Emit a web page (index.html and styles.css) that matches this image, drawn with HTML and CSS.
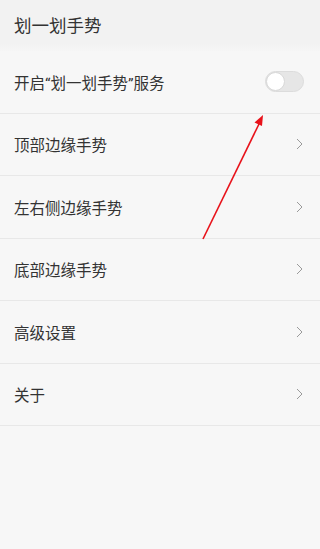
FILE: index.html
```html
<!DOCTYPE html>
<html lang="zh-CN">
<head>
  <meta charset="UTF-8">
  <meta name="viewport" content="width=device-width, initial-scale=1.0">
  <title>划一划手势</title>
  <link rel="stylesheet" href="styles.css">
</head>
<body>
  <!-- Header -->
  <header class="title-bar">
    <h1>划一划手势</h1>
  </header>

  <!-- Settings list -->
  <main class="settings">
    <div class="row">
      <span class="label">开启“划一划手势”服务</span>
      <span class="switch"><span class="knob"></span></span>
    </div>
    <div class="row">
      <span class="label">顶部边缘手势</span>
      <svg class="chevron" viewBox="0 0 7 12"><path d="M1 1l5 5-5 5"/></svg>
    </div>
    <div class="row">
      <span class="label">左右侧边缘手势</span>
      <svg class="chevron" viewBox="0 0 7 12"><path d="M1 1l5 5-5 5"/></svg>
    </div>
    <div class="row">
      <span class="label">底部边缘手势</span>
      <svg class="chevron" viewBox="0 0 7 12"><path d="M1 1l5 5-5 5"/></svg>
    </div>
    <div class="row">
      <span class="label">高级设置</span>
      <svg class="chevron" viewBox="0 0 7 12"><path d="M1 1l5 5-5 5"/></svg>
    </div>
    <div class="row">
      <span class="label">关于</span>
      <svg class="chevron" viewBox="0 0 7 12"><path d="M1 1l5 5-5 5"/></svg>
    </div>
  </main>

  <!-- Annotation arrow -->
  <svg class="arrow" viewBox="0 0 320 549">
    <line x1="203" y1="239" x2="259" y2="124" stroke="#e8121a" stroke-width="1.6"/>
    <polygon points="263,115 254.5,122.5 262,126" fill="#e8121a"/>
  </svg>
</body>
</html>
```

FILE: styles.css
```css
/* General Reset */
* {
  margin: 0;
  padding: 0;
  box-sizing: border-box;
}

body {
  font-family: Roboto, "Noto Sans CJK SC", sans-serif;
  background-color: #f7f7f7;
  color: #333;
  min-height: 100vh;
  position: relative;
}

/* Header */
.title-bar {
  height: 51px;
  background: linear-gradient(#f2f2f2 85%, #f6f6f6);
  display: flex;
  align-items: center;
  padding: 0 14px 2px;
}

.title-bar h1 {
  font-size: 17.5px;
  font-weight: normal;
  color: #333;
}

/* Rows */
.row {
  height: 62.5px;
  display: flex;
  align-items: center;
  justify-content: space-between;
  padding: 0 17px 0 14px;
  border-bottom: 1.5px solid #e8e8e8;
}

.label {
  font-size: 15.5px;
  color: #333;
}

.chevron {
  width: 7px;
  height: 12px;
  fill: none;
  stroke: #9a9a9a;
  stroke-width: 1;
}

/* Switch */
.switch {
  width: 39px;
  height: 21px;
  margin-right: -1px;
  border-radius: 11px;
  background-color: #e6e6e6;
  border: 1px solid #dcdcdc;
  display: flex;
  align-items: center;
}

.knob {
  width: 19px;
  height: 19px;
  border-radius: 50%;
  background-color: #fff;
  border: 1px solid #d8d8d8;
}

/* Arrow overlay */
.arrow {
  position: absolute;
  top: 0;
  left: 0;
  width: 320px;
  height: 549px;
  pointer-events: none;
}
```
